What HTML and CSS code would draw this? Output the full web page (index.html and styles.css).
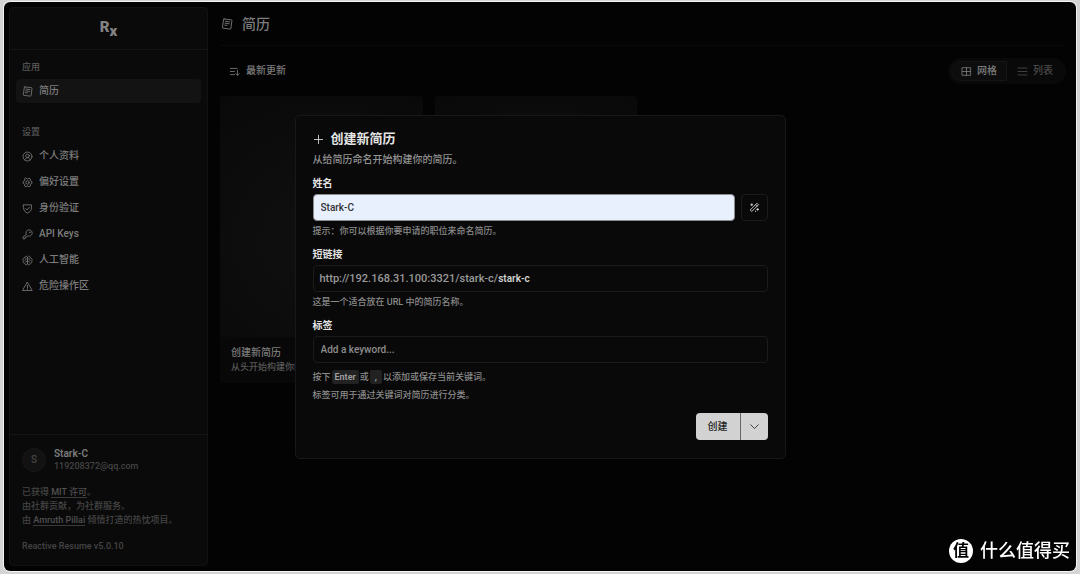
FILE: index.html
```html
<!DOCTYPE html>
<html lang="zh-CN">
<head>
<meta charset="utf-8">
<meta name="viewport" content="width=device-width, initial-scale=1">
<title>简历 - Reactive Resume</title>
<link rel="stylesheet" href="styles.css">
</head>
<body>
<svg class="sprite" aria-hidden="true">
	<symbol id="icon-resume" viewBox="0 0 16 16"><path d="M4.200 1.300 14 2.600a.7.7 0 0 1 .6.8l-1.500 10.800a.7.7 0 0 1-.8.6l-9.800-1.300a.7.7 0 0 1-.6-.8L3.400 1.900a.7.7 0 0 1 .8-.6zM5.800 4.400l5.600.8M5.400 7l5.600.8M5 9.500l2.800.4" /></symbol>
	<symbol id="icon-user" viewBox="0 0 16 16"><circle cx="8" cy="8" r="6.5" /><circle cx="8" cy="7" r="2.6" /><path d="M4 13c.8-2 2.200-3.300 4-3.300s3.200 1.300 4 3.300" /></symbol>
	<symbol id="icon-gear" viewBox="0 0 16 16"><circle cx="8" cy="8" r="2.500" /><path d="M5.800 1.700 8 3l2.200-1.300 2 1.200v2.500L14.500 6.800v2.400l-2.300 1.400v2.500l-2 1.200L8 13l-2.200 1.300-2-1.200v-2.500L1.500 9.200V6.800l2.300-1.400V2.900z" /></symbol>
	<symbol id="icon-shield" viewBox="0 0 16 16"><path d="M2.200 2.700h11.600v4.500c0 4-2.800 6.300-5.800 7.500-3-1.200-5.800-3.500-5.800-7.500zM5.300 8l2 2 3.500-3.800" /></symbol>
	<symbol id="icon-key" viewBox="0 0 16 16"><path d="M6 7.600A4.600 4.600 0 1 1 8.400 10L7.300 11H5.800v1.600H4.200v1.700H1.700v-2.500z" /><circle cx="11.300" cy="4.700" r=".4" /></symbol>
	<symbol id="icon-brain" viewBox="0 0 16 16"><path d="M8 3.500v9.200M8 3.500C7.600.9 3.600 1.300 3.800 4.200 1.400 4.700.4 7.200 1.900 8.400.9 10.500 2.300 12 3.800 12c.4 2.900 3.900 2.900 4.200.5M8 3.500C8.400.9 12.400 1.300 12.200 4.200c2.400.5 3.400 3 1.900 4.200 1 2.100-.4 3.600-1.900 3.600-.4 2.900-3.900 2.900-4.200.5M5.800 5v1.600L4.300 7.600M10.200 5v1.600l1.500 1M8 8.500 5.300 10.200M8 8.500l2.700 1.700" /></symbol>
	<symbol id="icon-warning" viewBox="0 0 16 16"><path d="M8 2 14.800 13.800H1.200zM8 6.300v3.500M8 11.300v.8" /></symbol>
	<symbol id="icon-sort" viewBox="0 0 16 16"><path d="M2 3.500h10M2 8h6M2 12.500h6M12.300 6.500v7M9.800 11l2.500 2.500 2.500-2.500" /></symbol>
	<symbol id="icon-grid" viewBox="0 0 16 16"><path d="M2 2.500h12v11H2zM8 2.500v11M2 8h12" /></symbol>
	<symbol id="icon-list" viewBox="0 0 16 16"><path d="M1.500 3h13M1.500 8h13M1.500 13h13" /></symbol>
	<symbol id="icon-plus" viewBox="0 0 16 16"><path d="M8 2v12M2 8h12" /></symbol>
	<symbol id="icon-wand" viewBox="0 0 16 16"><path d="M12 2.200 13.800 4 4 13.800 2.200 12zM9.800 4.400l1.800 1.800M4 2.600v2.800M2.600 4h2.800M12.600 9.400v2.800M11.200 10.800H14M9.600 13.200v.8" /></symbol>
	<symbol id="icon-caret" viewBox="0 0 16 16"><path d="m2.500 5.500 5.500 5.500 5.500-5.500" /></symbol>
</svg>

<div class="window">
	<aside class="sidebar">
		<a class="logo" href="#" aria-label="Rx">R<sub>x</sub></a>
		<nav class="nav">
			<section class="nav-group">
				<h2>应用</h2>
				<a class="active" href="#"><svg class="icon"><use href="#icon-resume" /></svg>简历</a>
			</section>
			<section class="nav-group">
				<h2>设置</h2>
				<a href="#"><svg class="icon"><use href="#icon-user" /></svg>个人资料</a>
				<a href="#"><svg class="icon"><use href="#icon-gear" /></svg>偏好设置</a>
				<a href="#"><svg class="icon"><use href="#icon-shield" /></svg>身份验证</a>
				<a href="#"><svg class="icon"><use href="#icon-key" /></svg>API Keys</a>
				<a href="#"><svg class="icon"><use href="#icon-brain" /></svg>人工智能</a>
				<a href="#"><svg class="icon"><use href="#icon-warning" /></svg>危险操作区</a>
			</section>
		</nav>
		<footer class="sidebar-footer">
			<div class="account">
				<span class="avatar">S</span>
				<div>
					<strong>Stark-C</strong>
					<span>119208372@qq.com</span>
				</div>
			</div>
			<p>已获得 <a href="#">MIT 许可</a>。</p>
			<p>由社群贡献，为社群服务。</p>
			<p>由 <a href="#">Amruth Pillai</a> 倾情打造的热忱项目。</p>
			<p class="version">Reactive Resume v5.0.10</p>
		</footer>
	</aside>

	<main class="main">
		<header class="page-header">
			<svg class="icon"><use href="#icon-resume" /></svg>
			<h1>简历</h1>
		</header>
		<div class="toolbar">
			<button class="sort" type="button"><svg class="icon"><use href="#icon-sort" /></svg>最新更新</button>
			<div class="tabs">
				<button class="active" type="button"><svg class="icon"><use href="#icon-grid" /></svg>网格</button>
				<button type="button"><svg class="icon"><use href="#icon-list" /></svg>列表</button>
			</div>
		</div>
		<div class="cards">
			<article class="card">
				<div class="card-caption">
					<h3>创建新简历</h3>
					<p>从头开始构建你的简历</p>
				</div>
			</article>
			<article class="card"></article>
		</div>
	</main>
</div>

<div class="overlay">
	<form class="dialog" role="dialog" aria-labelledby="dialog-title">
		<h2 id="dialog-title"><svg class="icon"><use href="#icon-plus" /></svg>创建新简历</h2>
		<p class="description">从给简历命名开始构建你的简历。</p>

		<div class="field">
			<label for="name">姓名</label>
			<div class="input-row">
				<input class="autofilled" id="name" type="text" value="Stark-C">
				<button class="random" type="button" aria-label="随机名称"><svg class="icon"><use href="#icon-wand" /></svg></button>
			</div>
			<p class="hint">提示：你可以根据你要申请的职位来命名简历。</p>
		</div>

		<div class="field">
			<label for="slug">短链接</label>
			<div class="input-group">
				<span>http://192.168.31.100:3321/stark-c/</span>
				<input id="slug" type="text" value="stark-c">
			</div>
			<p class="hint">这是一个适合放在 URL 中的简历名称。</p>
		</div>

		<div class="field">
			<label for="tags">标签</label>
			<input id="tags" type="text" placeholder="Add a keyword...">
			<div class="hint key-hint">
				<p>按下<kbd>Enter</kbd>或<kbd>,</kbd>以添加或保存当前关键词。</p>
				<p>标签可用于通过关键词对简历进行分类。</p>
			</div>
		</div>

		<div class="actions">
			<button type="submit">创建</button>
			<button class="more" type="button" aria-label="更多选项"><svg class="icon"><use href="#icon-caret" /></svg></button>
		</div>
	</form>
</div>

<div class="watermark">
	<span class="badge">值</span>
	<span>什么值得买</span>
</div>
</body>
</html>
```

FILE: styles.css
```css
*
{
	box-sizing: border-box;
	margin: 0;
	padding: 0;
}
body
{
	display: flex;
	min-height: 100vh;
	padding: 2px 4px 3px;
	background: #d4d4d4;
	color: #7c7c7c;
	font-family: Roboto, "Noto Sans CJK SC", sans-serif;
	font-size: 10px;
	font-weight: 500;
	line-height: 14px;
}
a
{
	color: inherit;
	text-decoration: none;
}
button, input
{
	border: 0;
	background: none;
	color: inherit;
	font: inherit;
}
.sprite
{
	position: absolute;
	width: 0;
	height: 0;
}
.icon
{
	flex: none;
	width: 11px;
	height: 11px;
	fill: none;
	stroke: currentColor;
	stroke-width: 1.2;
	stroke-linejoin: round;
	stroke-linecap: round;
}
.window
{
	display: flex;
	flex: 1;
	padding: 5px;
	border-radius: 6px;
	background: #030303;
	box-shadow: 0 0 0 1px #f4f4f4;
}

/* sidebar */
.sidebar
{
	display: flex;
	flex: none;
	flex-direction: column;
	width: 199px;
	border: 1px solid #121212;
	border-radius: 4px;
	background: #0a0a0a;
}
.logo
{
	height: 42px;
	border-bottom: 1px solid #151515;
	color: #828282;
	font-size: 15px;
	font-weight: 900;
	line-height: 39px;
	text-align: center;
}
.logo sub
{
	font-size: 15px;
	line-height: 0;
}
.nav
{
	display: flex;
	flex: 1;
	flex-direction: column;
	gap: 18px;
	padding: 6px;
}
.nav-group h2
{
	padding: 0 6px;
	color: #5a5a5a;
	font-size: 9px;
	font-weight: 500;
	line-height: 23px;
}
.nav-group a
{
	display: flex;
	align-items: center;
	gap: 6px;
	height: 24px;
	padding: 0 6px;
	border-radius: 4px;
}
.nav-group a + a
{
	margin-top: 2px;
}
.nav-group .active
{
	background: #131313;
}
.sidebar-footer
{
	padding: 12px;
	border-top: 1px solid #151515;
	color: #444;
	font-size: 9px;
}
.account
{
	display: flex;
	align-items: center;
	gap: 8px;
	margin-bottom: 12px;
}
.avatar
{
	width: 24px;
	height: 24px;
	border: 1px solid #181818;
	border-radius: 50%;
	background: #121212;
	font-size: 10px;
	line-height: 22px;
	text-align: center;
}
.account strong
{
	display: block;
	color: #7c7c7c;
	font-size: 10px;
	font-weight: 600;
	line-height: 13px;
}
.account div span
{
	display: block;
	line-height: 13px;
}
.sidebar-footer a
{
	border-bottom: 1px solid #3a3a3a;
	color: #505050;
}
.sidebar-footer .version
{
	margin-top: 12px;
}

/* resume list */
.main
{
	flex: 1;
	padding: 0 5px 0 12px;
}
.page-header
{
	display: flex;
	align-items: center;
	gap: 9px;
	height: 39px;
	padding-bottom: 4px;
	border-bottom: 1px solid #0a0a0a;
}
.page-header .icon
{
	width: 12px;
	height: 12px;
	margin-left: 1px;
}
.page-header h1
{
	font-size: 14px;
	font-weight: 500;
	line-height: 20px;
}
.toolbar
{
	display: flex;
	align-items: center;
	justify-content: space-between;
	margin: 12px 0;
}
.sort
{
	display: flex;
	align-items: center;
	gap: 6px;
	padding: 0 9px;
}
.tabs
{
	display: flex;
	height: 26px;
	padding: 3px;
	border-radius: 13px;
	background: #090909;
	color: #4c4c4c;
}
.tabs button
{
	display: flex;
	align-items: center;
	gap: 5px;
	padding: 0 9px;
	border: 1px solid transparent;
	border-radius: 0 10px 10px 0;
}
.tabs .active
{
	border-color: #151515;
	border-radius: 10px 0 0 10px;
	background: #0d0d0d;
	color: #7c7c7c;
}
.cards
{
	display: grid;
	grid-template-columns: repeat(4, 1fr);
	gap: 12px;
}
.card
{
	display: flex;
	align-items: flex-end;
	aspect-ratio: 202 / 286;
	overflow: hidden;
	border-radius: 4px;
	background: radial-gradient(circle, #101010, #090909);
}
.card-caption
{
	width: 100%;
	padding: 9px 11px;
	background: #080808;
}
.card-caption h3
{
	font-size: 10px;
	font-weight: 500;
}
.card-caption p
{
	color: #585858;
	font-size: 9px;
}

/* create dialog */
.overlay
{
	position: fixed;
	inset: 0;
	display: flex;
	align-items: center;
	justify-content: center;
}
.dialog
{
	width: 100%;
	max-width: 491px;
	padding: 16px 17px 18px;
	border: 1px solid #181818;
	border-radius: 5px;
	background: #090909;
	color: #e4e4e4;
}
.dialog h2
{
	display: flex;
	align-items: center;
	gap: 7px;
	font-size: 13px;
	font-weight: 700;
	line-height: 14px;
}
.dialog .description
{
	margin-top: 7px;
	color: #929292;
}
.field
{
	display: flex;
	flex-direction: column;
	margin-top: 10px;
}
.field label
{
	margin-bottom: 3px;
	font-weight: 700;
}
.field input, .input-group
{
	height: 27px;
	padding: 0 7px;
	border: 1px solid #1b1b1b;
	border-radius: 4px;
}
.field input::placeholder
{
	color: #8c8c8c;
	opacity: 1;
}
.input-row
{
	display: flex;
	gap: 6px;
}
.input-row input
{
	flex: 1;
	min-width: 0;
}
.field .autofilled
{
	border-color: #8b8b92;
	background: #e8effd;
	color: #333;
}
.random
{
	display: flex;
	align-items: center;
	justify-content: center;
	width: 27px;
	border: 1px solid #1b1b1b;
	border-radius: 4px;
}
.input-group
{
	display: flex;
	align-items: center;
	padding: 0 6px;
	color: #9a9a9a;
	font-size: 11px;
}
.input-group input
{
	flex: 1;
	min-width: 0;
	height: 100%;
	padding: 0;
	border: 0;
	color: #d0d0d0;
	font-size: 10px;
	font-weight: 600;
}
.hint
{
	margin-top: 3px;
	color: #8b8b8b;
	font-size: 9px;
}
.key-hint
{
	margin-top: 5px;
	line-height: 18px;
}
.key-hint kbd
{
	display: inline-block;
	height: 14px;
	margin: 0 1px;
	padding: 0 3px;
	border-radius: 2px;
	background: #222;
	color: #a0a0a0;
	font-family: inherit;
	font-weight: 600;
	line-height: 14px;
}
.key-hint kbd + kbd
{
	padding: 0 5px;
}
.actions
{
	display: flex;
	justify-content: flex-end;
	margin-top: 9px;
}
.actions button
{
	height: 27px;
	padding: 0 12px;
	border-radius: 4px 0 0 4px;
	background: #d2d2d2;
	color: #222;
}
.actions .more
{
	display: flex;
	align-items: center;
	padding: 0 8px;
	border-left: 1px solid #666;
	border-radius: 0 4px 4px 0;
}

.watermark
{
	position: fixed;
	right: 10px;
	bottom: 11px;
	display: flex;
	align-items: center;
	gap: 7px;
	color: #fff;
	font-size: 18px;
	line-height: 24px;
}
.badge
{
	width: 24px;
	border-radius: 50%;
	background: #fff;
	color: #000;
	font-size: 16px;
	font-weight: 700;
	text-align: center;
}
```
